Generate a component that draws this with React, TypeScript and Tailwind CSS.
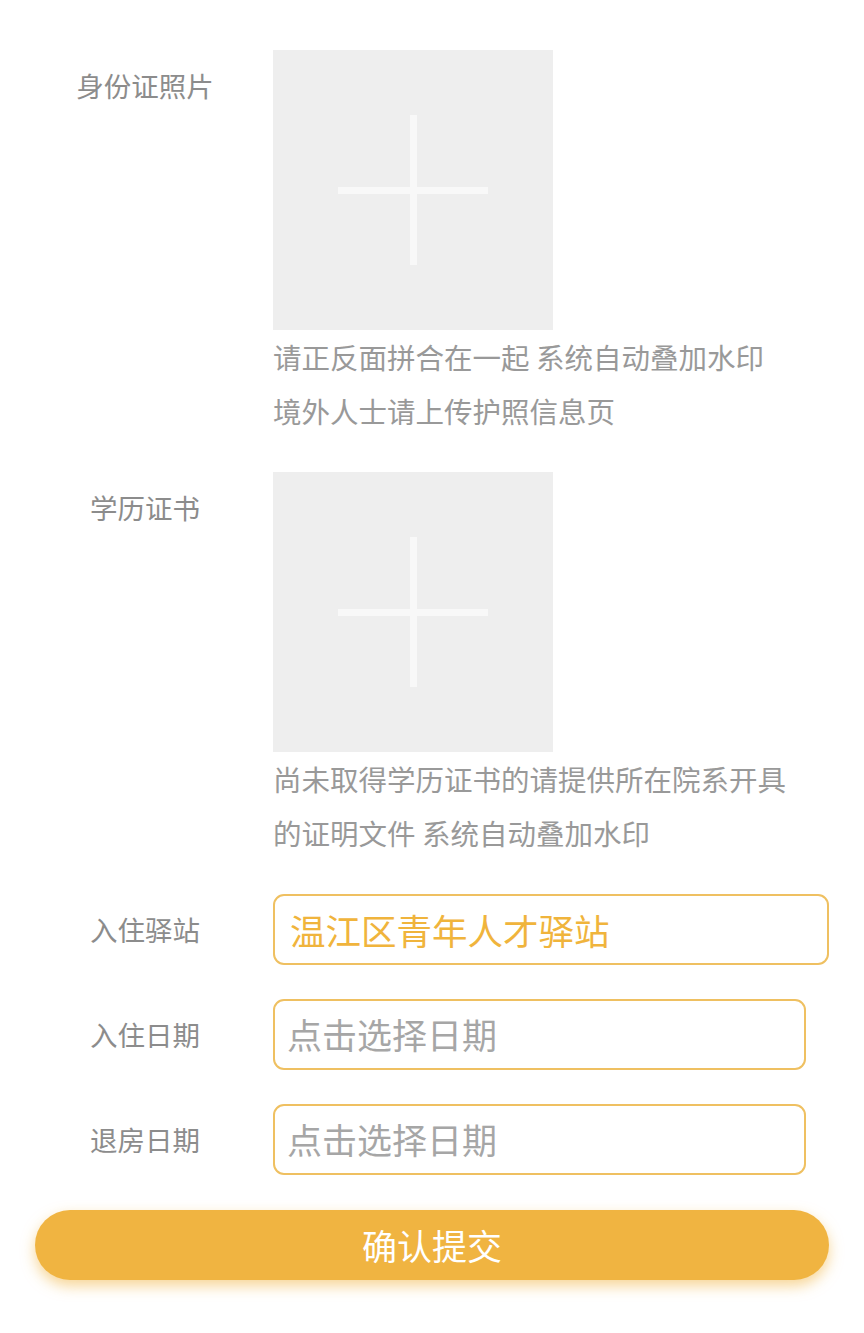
const font = "font-['Noto_Sans_CJK_SC','Noto_Sans',sans-serif]";

function UploadBox() {
  return (
    <div className="relative flex h-[280px] w-[280px] items-center justify-center bg-[#eeeeee]">
      <div className="absolute h-[7px] w-[150px] bg-[#f8f8f8]" />
      <div className="absolute h-[150px] w-[7px] bg-[#f8f8f8]" />
    </div>
  );
}

function UploadRow({ label, lines }: { label: string; lines: string[] }) {
  return (
    <div className="flex">
      <div className="w-[250px] pt-[13px] text-center text-[27.5px] leading-[44px] text-[#8c8c8c]">
        {label}
      </div>
      <div className="ml-[3px] flex flex-col">
        <UploadBox />
        <div className="text-[28.5px] leading-[54px] text-[#999999]">
          {lines.map((l) => (
            <div key={l} className="whitespace-pre">
              {l}
            </div>
          ))}
        </div>
      </div>
    </div>
  );
}

function InputRow({
  label,
  value,
  placeholder,
  wide,
}: {
  label: string;
  value?: string;
  placeholder?: string;
  wide?: boolean;
}) {
  return (
    <div className="flex items-center">
      <div className="w-[250px] text-center text-[27.5px] text-[#8c8c8c]">{label}</div>
      <div
        className={`ml-[3px] flex h-[71px] items-center rounded-[11px] border-2 border-[#efc061] ${
          wide ? "w-[556px] px-[15px]" : "w-[533px] px-[12px]"
        }`}
      >
        {value ? (
          <span className="text-[35.5px] text-[#f0b43c]">{value}</span>
        ) : (
          <span className="text-[35px] text-[#a6a6a6]">{placeholder}</span>
        )}
      </div>
    </div>
  );
}

export default function App() {
  return (
    <div className={`min-h-[1333px] w-[864px] bg-white pl-[20px] pt-[50px] ${font}`}>
      <UploadRow label="身份证照片" lines={["请正反面拼合在一起 系统自动叠加水印", "境外人士请上传护照信息页"]} />
      <div className="mt-[34px]">
        <UploadRow
          label="学历证书"
          lines={["尚未取得学历证书的请提供所在院系开具", "的证明文件 系统自动叠加水印"]}
        />
      </div>
      <div className="mt-[34px] flex flex-col gap-[34px]">
        <InputRow label="入住驿站" value="温江区青年人才驿站" wide />
        <InputRow label="入住日期" placeholder="点击选择日期" />
        <InputRow label="退房日期" placeholder="点击选择日期" />
      </div>
      <div className="mt-[35px] pl-[15px]">
        <button className="flex h-[70px] w-[794px] items-center justify-center rounded-full bg-[#f0b441] text-[35px] text-white shadow-[0_6px_14px_rgba(240,180,65,0.55)]">
          确认提交
        </button>
      </div>
    </div>
  );
}
